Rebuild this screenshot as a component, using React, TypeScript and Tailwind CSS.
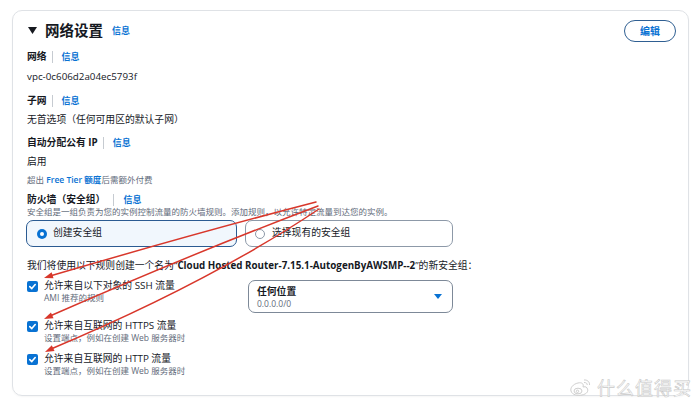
import React from "react";

const Sep = () => <span className="mx-[5px] inline-block h-[12px] w-px bg-[#c6cbd1]" />;
const Info = ({ cls = "" }: { cls?: string }) => (
  <span className={"text-[9px] font-bold text-[#0972d3] " + cls}>信息</span>
);

const Check = () => (
  <span className="flex h-[11px] w-[11px] shrink-0 items-center justify-center rounded-[2px] bg-[#0972d3]">
    <svg width="9" height="9" viewBox="0 0 10 10">
      <path d="M2 5.2 L4.2 7.3 L8 2.8" fill="none" stroke="white" strokeWidth="1.8" strokeLinecap="round" strokeLinejoin="round" />
    </svg>
  </span>
);

function head(tx: number, ty: number, fx: number, fy: number) {
  const dx = tx - fx;
  const dy = ty - fy;
  const l = Math.hypot(dx, dy);
  const ux = dx / l;
  const uy = dy / l;
  const bx = tx - ux * 9;
  const by = ty - uy * 9;
  const px = -uy * 3.2;
  const py = ux * 3.2;
  return `${tx},${ty} ${bx + px},${by + py} ${bx - px},${by - py}`;
}

const Arrows = () => (
  <svg className="pointer-events-none absolute left-0 top-0" width="700" height="406" viewBox="0 0 700 406">
    <g stroke="#d8372b" strokeWidth="1.5" fill="none" strokeLinecap="round">
      <path d="M316 202 Q 200 232 50 276" />
      <path d="M318 206 Q 196 252 50 316" />
      <path d="M319 209 Q 210 282 51 349" />
    </g>
    <g fill="#d8372b">
      <polygon points={head(44, 278, 60, 273)} />
      <polygon points={head(44, 319, 60, 312)} />
      <polygon points={head(45, 352, 60, 345)} />
    </g>
  </svg>
);

const Watermark = () => (
  <div className="absolute left-[569px] top-[377px] flex items-center gap-[4px]">
    <svg width="24" height="20" viewBox="0 0 24 20">
      <g fill="none" stroke="#cfcfcf" strokeWidth="1">
        <path d="M9 6 C4 7 1 11 2 14 C3 18 9 19 13 18 C18 17 20 14 18 11 C17 9 15 10 14 10 C15 7 13 5 9 6 Z" />
        <ellipse cx="9" cy="14" rx="4" ry="2.8" />
        <circle cx="8.5" cy="14.3" r="1.2" />
        <path d="M15 3 C18 2.5 21 5 20.5 8" />
        <path d="M15 5.5 C17 5.3 18.5 6.5 18.2 8" />
      </g>
    </svg>
    <span className="text-[18px] leading-none tracking-[1px] text-white [-webkit-text-stroke:0.6px_#c8c8c8] font-['Noto_Sans_CJK_SC',sans-serif]">
      什么值得买
    </span>
  </div>
);

export default function App() {
  return (
    <div className="relative h-[406px] w-[700px] overflow-hidden bg-white font-['Open_Sans','Noto_Sans_CJK_SC',sans-serif] text-[#16191f]">
      <div className="pl-[12px] pt-[10px]">
        <div className="h-[386px] w-[677px] rounded-[10px] border border-[#dfe2e6] pl-[14px] pr-[12px] shadow-[0_1px_2px_rgba(0,0,0,0.04)]">
          {/* header */}
          <div className="flex h-[22px] items-center justify-between mt-[9px]">
            <div className="flex items-center">
              <svg width="9" height="8" viewBox="0 0 9 8" className="ml-[1px]">
                <polygon points="0,0 9,0 4.5,7" fill="#16191f" />
              </svg>
              <span className="ml-[8px] text-[14.5px] font-bold leading-none">网络设置</span>
              <Info cls="ml-[9px]" />
            </div>
            <button className="flex h-[22px] w-[52px] items-center justify-center rounded-full border-[1.5px] border-[#2f5f92] text-[10px] font-bold text-[#0972d3]">
              编辑
            </button>
          </div>

          <div className="mt-[7px] flex h-[16px] items-center text-[9.8px] font-bold">
            网络<Sep /><Info cls="ml-[4px]" />
          </div>
          <div className="mt-[4px] flex h-[16px] items-center text-[9.8px]">vpc-0c606d2a04ec5793f</div>

          <div className="mt-[8px] flex h-[16px] items-center text-[9.8px] font-bold">
            子网<Sep /><Info cls="ml-[4px]" />
          </div>
          <div className="mt-[3px] flex h-[16px] items-center text-[9.8px]">无首选项（任何可用区的默认子网）</div>

          <div className="mt-[7px] flex h-[16px] items-center text-[9.8px] font-bold">
            自动分配公有 IP<Sep /><Info cls="ml-[4px]" />
          </div>
          <div className="mt-[3px] flex h-[16px] items-center text-[9.8px]">启用</div>
          <div className="mt-[3px] flex h-[14px] items-center text-[8.5px] text-[#5f6b7a]">
            超出&nbsp;<span className="font-semibold text-[#0972d3]">Free Tier 额度</span>后需额外付费
          </div>

          <div className="mt-[6px] flex h-[14px] items-center text-[9.8px] font-bold">
            防火墙（安全组）<span className="ml-[8px] inline-block h-[12px] w-px bg-[#c6cbd1]" /><Info cls="ml-[9px]" />
          </div>
          <div className="flex h-[10px] items-center text-[8.5px] text-[#5f6b7a]">
            安全组是一组负责为您的实例控制流量的防火墙规则。添加规则，以允许特定流量到达您的实例。
          </div>

          <div className="mt-[3px] flex h-[27px]">
            <div className="ml-[-1px] flex w-[211px] items-center rounded-[7px] border-[1.5px] border-[#2b5b92] bg-[#f1f7fd] pl-[10px]">
              <span className="flex h-[10px] w-[10px] items-center justify-center rounded-full bg-[#0972d3]">
                <span className="h-[4px] w-[4px] rounded-full bg-white" />
              </span>
              <span className="ml-[6px] text-[9.8px]">创建安全组</span>
            </div>
            <div className="ml-[8px] flex w-[208px] items-center rounded-[7px] border-[1.5px] border-[#8d99a8] pl-[9px]">
              <span className="h-[10px] w-[10px] rounded-full border border-[#8d99a8] bg-white" />
              <span className="ml-[7px] text-[9.8px]">选择现有的安全组</span>
            </div>
          </div>

          <div className="mt-[11px] flex h-[16px] items-center text-[9.8px]">
            我们将使用以下规则创建一个名为“<span className="font-bold">Cloud Hosted Router-7.15.1-AutogenByAWSMP--2</span>”的新安全组：
          </div>

          <div className="mt-[6px] flex">
            <div className="flex w-[221px] items-start">
              <div className="mt-[1px]"><Check /></div>
              <div className="ml-[6px]">
                <div className="flex h-[12px] items-center text-[9.8px]">允许来自以下对象的 SSH 流量</div>
                <div className="flex h-[12px] items-center text-[8.5px] text-[#5f6b7a]">AMI 推荐的规则</div>
              </div>
            </div>
            <div className="flex h-[33px] w-[205px] items-center justify-between rounded-[7px] border-[1.5px] border-[#7d8998] pl-[8px] pr-[10px]">
              <div className="flex flex-col">
                <span className="text-[9.8px] font-semibold leading-[13px]">任何位置</span>
                <span className="text-[8.5px] leading-[11px] text-[#5f6b7a]">0.0.0.0/0</span>
              </div>
              <svg width="8" height="6" viewBox="0 0 8 6">
                <polygon points="0,0 8,0 4,5" fill="#0972d3" />
              </svg>
            </div>
          </div>

          <div className="mt-[7px] flex items-start">
            <div className="mt-[1px]"><Check /></div>
            <div className="ml-[6px]">
              <div className="flex h-[12px] items-center text-[9.8px]">允许来自互联网的 HTTPS 流量</div>
              <div className="flex h-[13px] items-center text-[8.5px] text-[#5f6b7a]">设置端点，例如在创建 Web 服务器时</div>
            </div>
          </div>

          <div className="mt-[8px] flex items-start">
            <div className="mt-[1px]"><Check /></div>
            <div className="ml-[6px]">
              <div className="flex h-[12px] items-center text-[9.8px]">允许来自互联网的 HTTP 流量</div>
              <div className="flex h-[13px] items-center text-[8.5px] text-[#5f6b7a]">设置端点，例如在创建 Web 服务器时</div>
            </div>
          </div>
        </div>
      </div>
      <Watermark />
      <Arrows />
    </div>
  );
}
